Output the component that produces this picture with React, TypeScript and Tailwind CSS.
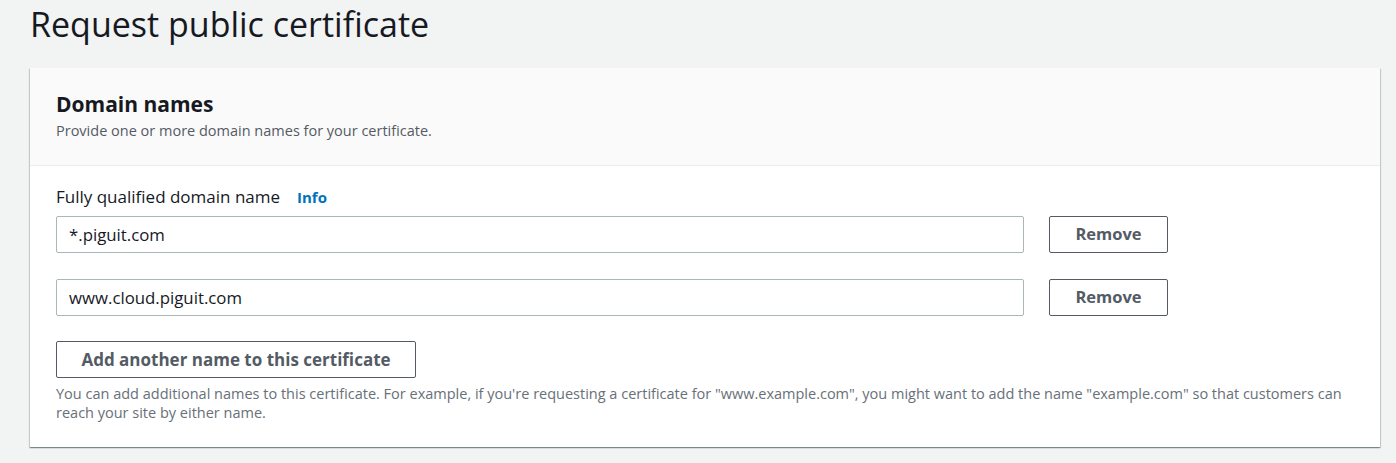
import React from "react";

export default function App() {
  const font = { fontFamily: '"Open Sans", "Noto Sans", Arial, sans-serif' };
  return (
    <div className="w-[1396px] h-[463px] bg-[#f2f3f3] overflow-hidden" style={font}>
      <div className="pl-[30px] pr-[16px]">
        <h1 className="pt-[2px] h-[68px] text-[34px] leading-[44px] text-[#16191f] font-normal">
          Request public certificate
        </h1>
        <div className="bg-white shadow-[0_1px_1px_0_rgba(0,28,36,0.3),1px_1px_1px_0_rgba(0,28,36,0.15),-1px_1px_1px_0_rgba(0,28,36,0.15)]">
          <div className="bg-[#fafafa] border-b border-[#eaeded] px-[26px] pt-[22px] pb-[23px]">
            <h2 className="text-[21px] leading-[28px] font-bold text-[#16191f]">Domain names</h2>
            <p className="mt-[2px] text-[14.5px] leading-[22px] text-[#545b64]">
              Provide one or more domain names for your certificate.
            </p>
          </div>
          <div className="px-[26px] pt-[20px] pb-[25px]">
            <div className="flex items-center gap-[17px] h-[22px]">
              <span className="text-[17px] text-[#16191f]">Fully qualified domain name</span>
              <span className="text-[15px] font-bold text-[#0073bb]">Info</span>
            </div>
            <div className="flex items-center mt-[8px]">
              <div className="w-[968px] h-[37px] border border-[#aab7b8] rounded-[2px] flex items-center px-[12px] text-[16.8px] text-[#16191f]">
                *.piguit.com
              </div>
              <button className="ml-[25px] w-[119px] h-[37px] border border-[#545b64] rounded-[2px] text-[16.5px] font-bold text-[#545b64]">
                Remove
              </button>
            </div>
            <div className="flex items-center mt-[26px]">
              <div className="w-[968px] h-[37px] border border-[#aab7b8] rounded-[2px] flex items-center px-[12px] text-[16.8px] text-[#16191f]">
                www.cloud.piguit.com
              </div>
              <button className="ml-[25px] w-[119px] h-[37px] border border-[#545b64] rounded-[2px] text-[16.5px] font-bold text-[#545b64]">
                Remove
              </button>
            </div>
            <button className="mt-[25px] w-[360px] h-[37px] border border-[#545b64] rounded-[2px] text-[17px] font-bold text-[#545b64]">
              Add another name to this certificate
            </button>
            <p className="mt-[6px] text-[14.5px] leading-[19px] text-[#687078] w-[1310px]">
              You can add additional names to this certificate. For example, if you're requesting a certificate for "www.example.com", you might want to add the name "example.com" so that customers can reach your site by either name.
            </p>
          </div>
        </div>
      </div>
    </div>
  );
}
